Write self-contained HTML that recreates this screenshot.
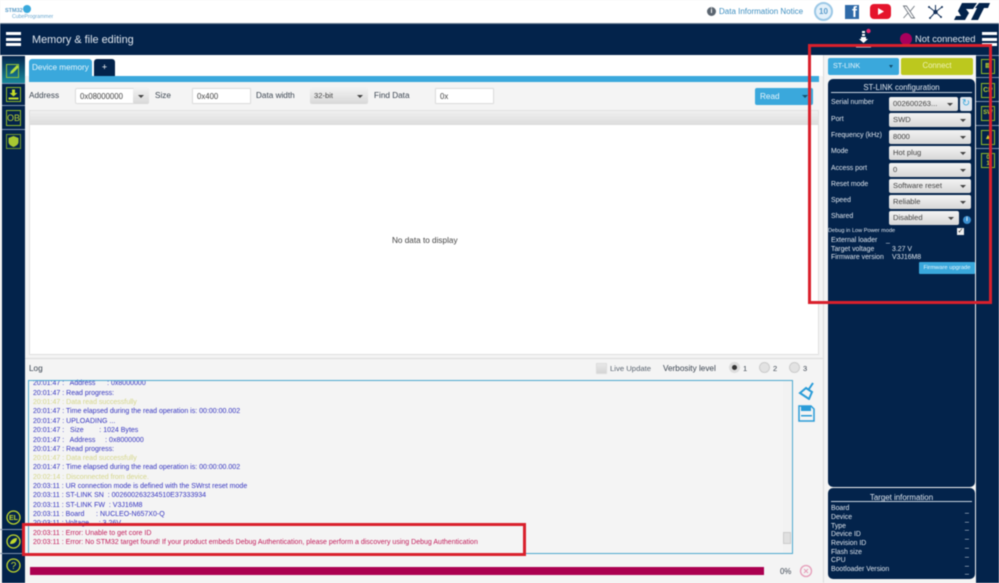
<!DOCTYPE html>
<html><head><meta charset="utf-8">
<style>
html,body{margin:0;padding:0;width:999px;height:583px;overflow:hidden;background:#f4f4f4;font-family:"Liberation Sans",sans-serif;}
#p{position:absolute;left:0;top:0;width:999px;height:583px;overflow:hidden;filter:blur(0.4px);}
.a{position:absolute;box-sizing:border-box;white-space:nowrap;}
.t{position:absolute;white-space:nowrap;font-size:8.2px;line-height:10px;color:#3a4450;margin-top:1px;}
.c{position:absolute;box-sizing:border-box;background:linear-gradient(#f2f2f2,#d8d8d8);border-radius:2px;font-size:7.6px;color:#444;padding-left:4px;white-space:nowrap;}
.c:after{content:"";position:absolute;right:5px;top:50%;margin-top:-1px;border-left:3px solid transparent;border-right:3px solid transparent;border-top:3px solid #444;}
.w{position:absolute;color:#dfe6ee;font-size:6.9px;line-height:9px;white-space:nowrap;margin-top:1px;}
.l{position:absolute;left:33px;font-size:7.03px;line-height:9px;white-space:nowrap;color:#3535c0;margin-top:1px;}
.y{color:#d5d68a}.r{color:#c21c5a}
.ic{position:absolute;box-sizing:border-box;border:1px solid #8fb82a;color:#b8d030;font-size:7px;text-align:center;font-weight:bold;}
.sep{position:absolute;height:1px;background:#7f93ad;}
</style></head><body><div id="p">

<!-- top bar -->
<div class="a" style="left:0;top:0;width:999px;height:24px;background:#fff;border-bottom:1px solid #6f8196;"></div>
<div class="a" style="left:5px;top:8px;font-size:5.5px;line-height:7px;font-weight:bold;color:#5a9cc8;">STM32</div>
<div class="a" style="left:23px;top:5px;width:8px;height:8px;border-radius:50%;background:#39a9dc;"></div>
<div class="a" style="left:12px;top:14px;font-size:5.2px;line-height:6px;color:#6ba8d0;">CubeProgrammer</div>
<div class="a" style="left:707px;top:7px;width:9px;height:9px;border-radius:50%;background:#5b6570;color:#fff;font-size:7px;line-height:9px;text-align:center;font-weight:bold;">i</div>
<div class="a" style="left:719px;top:7px;font-size:8px;line-height:10px;color:#3f8fc0;">Data Information Notice</div>
<div class="a" style="left:814px;top:2px;width:19px;height:19px;border-radius:50%;border:2px solid #9cc8e6;background:#e4f1fa;color:#5b9ccb;font-size:8px;line-height:15px;text-align:center;font-weight:bold;">10</div>
<div class="a" style="left:845px;top:5px;width:14px;height:14px;background:#2f6aa8;color:#fff;font-size:15px;line-height:16px;text-align:right;padding-right:2px;font-weight:bold;">f</div>
<svg class="a" style="left:870px;top:4px" width="21" height="16"><rect width="21" height="15" rx="4" fill="#e5142c"/><path d="M8 4l6 3.500-6 3.500z" fill="#fff"/></svg>
<svg class="a" style="left:902px;top:5px" width="14" height="14"><path d="M1.500 1h3l8 12h-3z" fill="none" stroke="#707780" stroke-width="0.900"/><path d="M12.500 1L8 6.500M6 8L1.500 13" stroke="#707780" stroke-width="0.900"/></svg>
<svg class="a" style="left:927px;top:4px" width="17" height="16"><path d="M8.500 8L2 3M8.500 8L15 3M8.500 8L3 14M8.500 8L14 13M8.500 8V1" stroke="#14315a" stroke-width="1"/><circle cx="8.500" cy="8" r="2.200" fill="#14315a"/><circle cx="2" cy="3" r="1" fill="#14315a"/><circle cx="15" cy="3" r="1" fill="#14315a"/><circle cx="3" cy="14" r="1" fill="#14315a"/><circle cx="14" cy="13" r="1" fill="#14315a"/></svg>
<svg class="a" style="left:953px;top:2px" width="37" height="19"><path d="M9 1H24L20 7H13L16 11 12 18H1L3 14H8L5 9z" fill="#03234b"/><path d="M26 1H37L35 6H31L25 18H18L24 6H22z" fill="#03234b"/></svg>

<!-- header -->
<div class="a" style="left:0;top:24px;width:999px;height:31px;background:#03234b;"></div>
<div class="a" style="left:6px;top:32px;width:15px;height:3px;background:#fff;"></div>
<div class="a" style="left:6px;top:38px;width:15px;height:3px;background:#fff;"></div>
<div class="a" style="left:6px;top:43px;width:15px;height:3px;background:#fff;"></div>
<div class="a" style="left:32px;top:33px;font-size:10.9px;line-height:14px;color:#dfe6ee;">Memory &amp; file editing</div>
<svg class="a" style="left:854px;top:27px" width="20" height="22"><path d="M8 4h3v2H8zM8 7h3v2H8zM7 10h5v2h2l-4.500 4L5 12h2z" fill="#fff"/><rect x="2" y="19" width="15" height="1.500" fill="#fff"/><circle cx="14.500" cy="4" r="2.200" fill="#e5286e"/></svg>
<div class="a" style="left:900px;top:33px;width:12px;height:12px;border-radius:50%;background:#a8005c;"></div>
<div class="a" style="left:915px;top:32px;font-size:9.4px;line-height:13px;color:#dfe6ee;">Not connected</div>
<div class="a" style="left:982px;top:32px;width:15px;height:3px;background:#fff;"></div>
<div class="a" style="left:982px;top:38px;width:15px;height:3px;background:#fff;"></div>
<div class="a" style="left:982px;top:43px;width:15px;height:3px;background:#fff;"></div>

<!-- left sidebar -->
<div class="a" style="left:2px;top:56px;width:23px;height:527px;background:#03234b;"></div>
<div class="a" style="left:2px;top:56px;width:23px;height:27px;background:linear-gradient(#03234b,#1a8a9c);"></div>
<svg class="a" style="left:6px;top:63px" width="15" height="16"><rect x="0.500" y="1.500" width="12" height="13" fill="none" stroke="#8fc23a"/><path d="M4 11l1-3 6-6 2 2-6 6z" fill="#b4dc3c"/></svg>
<div class="sep" style="left:2px;top:83px;width:23px"></div>
<svg class="a" style="left:6px;top:87px" width="15" height="15"><rect x="0.500" y="0.500" width="14" height="14" fill="none" stroke="#8fb82a"/><path d="M6 2.500h3V6h2.500L7.500 9.500 3.500 6H6zM2.500 10.500h10v2h-10z" fill="#c4dc28"/></svg>
<div class="sep" style="left:2px;top:105px;width:23px"></div>
<div class="ic" style="left:6px;top:110px;width:15px;height:16px;font-size:9px;line-height:14px;font-weight:normal;">OB</div>
<div class="sep" style="left:2px;top:129px;width:23px"></div>
<svg class="a" style="left:6px;top:134px" width="15" height="15"><rect x="0.500" y="0.500" width="14" height="14" fill="none" stroke="#6f9a2c"/><path d="M7.500 2l5 2v4c0 2.500-2.500 4-5 5-2.500-1-5-2.500-5-5V4z" fill="#a6c832"/></svg>
<svg class="a" style="left:6px;top:510px" width="15" height="15"><circle cx="7.500" cy="7.500" r="6.500" fill="none" stroke="#c0d82c" stroke-width="1.300"/><text x="7.500" y="10" font-size="7" font-weight="bold" text-anchor="middle" fill="#c0d82c" font-family="Liberation Sans">EL</text></svg>
<div class="sep" style="left:0;top:529px;width:25px"></div>
<svg class="a" style="left:6px;top:534px" width="15" height="15"><circle cx="7.500" cy="7.500" r="6.500" fill="none" stroke="#c0d82c" stroke-width="1.300"/><path d="M4 10c0-3 3-6 7-6 0 4-3 6-6 6z" fill="#c0d82c"/></svg>
<div class="sep" style="left:0;top:553px;width:25px"></div>
<svg class="a" style="left:6px;top:558px" width="15" height="15"><circle cx="7.500" cy="7.500" r="6.500" fill="none" stroke="#c0d82c" stroke-width="1.300"/><text x="7.500" y="11" font-size="10" text-anchor="middle" fill="#c0d82c" font-family="Liberation Sans">?</text></svg>

<!-- tabs -->
<div class="a" style="left:25px;top:55px;width:798px;height:21px;background:#fff;"></div>
<div class="a" style="left:29px;top:59px;width:63px;height:18px;background:#3aa8dc;border-radius:3px 3px 0 0;color:#e6f4fb;font-size:8.200px;line-height:17px;padding-left:3px;">Device memory</div>
<div class="a" style="left:94px;top:59px;width:21px;height:18px;background:#03234b;border-radius:3px 3px 0 0;color:#fff;font-size:9px;line-height:16px;text-align:center;">+</div>
<div class="a" style="left:29px;top:76px;width:790px;height:6px;background:#3aa8dc;"></div>

<!-- toolbar -->
<div class="t" style="left:29px;top:90px;">Address</div>
<div class="a" style="left:75px;top:88px;width:74px;height:16px;background:#fff;border:1px solid #ddd;border-radius:2px;font-size:7.800px;line-height:15px;padding-left:4px;color:#444;">0x08000000</div>
<div class="c" style="left:133px;top:88px;width:16px;height:16px;"></div>
<div class="t" style="left:155px;top:90px;">Size</div>
<div class="a" style="left:192px;top:88px;width:59px;height:16px;background:#fff;border:1px solid #ddd;font-size:7.800px;line-height:15px;padding-left:4px;color:#444;">0x400</div>
<div class="t" style="left:256px;top:90px;">Data width</div>
<div class="c" style="left:310px;top:88px;width:58px;height:16px;line-height:16px;">32-bit</div>
<div class="t" style="left:374px;top:90px;">Find Data</div>
<div class="a" style="left:435px;top:88px;width:59px;height:16px;background:#fff;border:1px solid #ddd;font-size:7.800px;line-height:15px;padding-left:4px;color:#444;">0x</div>
<div class="a" style="left:755px;top:88px;width:58px;height:17px;background:#3aa8dc;border-radius:2px;color:#e6f4fb;font-size:8.200px;line-height:17px;padding-left:5px;">Read</div>
<div class="a" style="left:802px;top:95px;border-left:3px solid transparent;border-right:3px solid transparent;border-top:3px solid #14506f;"></div>

<!-- table -->
<div class="a" style="left:29px;top:110px;width:790px;height:245px;background:#fff;border:1px solid #e0e0e0;"></div>
<div class="a" style="left:30px;top:111px;width:788px;height:14px;background:linear-gradient(#f0f0f0,#dcdcdc);"></div>
<div class="t" style="left:392px;top:235px;font-size:8.200px;color:#444;">No data to display</div>
<div class="a" style="left:25px;top:358px;width:798px;height:1px;background:#ddd;"></div>

<!-- log head -->
<div class="t" style="left:29px;top:363px;">Log</div>
<div class="a" style="left:596px;top:363px;width:11px;height:11px;background:linear-gradient(#e8e8e8,#d4d4d4);border:1px solid #ddd;"></div>
<div class="t" style="left:610px;top:363px;font-size:7.700px;color:#5a6470;">Live Update</div>
<div class="t" style="left:663px;top:363px;">Verbosity level</div>
<div class="a" style="left:729px;top:362px;width:11px;height:11px;border-radius:50%;background:#dcdcdc;"></div>
<div class="a" style="left:732px;top:365px;width:5px;height:5px;border-radius:50%;background:#333;"></div>
<div class="t" style="left:743px;top:363px;font-size:7.500px;">1</div>
<div class="a" style="left:759px;top:362px;width:11px;height:11px;border-radius:50%;background:#e2e2e2;border:1px solid #ccc;"></div>
<div class="t" style="left:773px;top:363px;font-size:7.500px;">2</div>
<div class="a" style="left:789px;top:362px;width:11px;height:11px;border-radius:50%;background:#e2e2e2;border:1px solid #ccc;"></div>
<div class="t" style="left:803px;top:363px;font-size:7.500px;">3</div>

<!-- log box -->
<div class="a" style="left:28px;top:380px;width:765px;height:174px;background:#f4f4f4;border:1px solid #4fa9cf;overflow:hidden;"></div>
<div class="a" style="left:783px;top:381px;width:9px;height:172px;background:#f2f2f2;"></div>
<div class="a" style="left:783px;top:532px;width:8px;height:12px;background:#e0e0e0;border:1px solid #ccc;"></div>
<div class="l" style="top:378px;">20:01:47 :&nbsp;&nbsp; Address&nbsp;&nbsp;&nbsp;&nbsp;&nbsp; : 0x8000000</div>
<div class="a" style="left:29px;top:380px;width:600px;height:1px;background:#4fa9cf;"></div>
<div class="l" style="top:388px;">20:01:47 : Read progress:</div>
<div class="l y" style="top:397px;">20:01:47 : Data read successfully</div>
<div class="l" style="top:406px;">20:01:47 : Time elapsed during the read operation is: 00:00:00.002</div>
<div class="l" style="top:416px;">20:01:47 : UPLOADING ...</div>
<div class="l" style="top:425px;">20:01:47 :&nbsp;&nbsp; Size&nbsp;&nbsp;&nbsp;&nbsp;&nbsp;&nbsp;&nbsp; : 1024 Bytes</div>
<div class="l" style="top:435px;">20:01:47 :&nbsp;&nbsp; Address&nbsp;&nbsp;&nbsp;&nbsp; : 0x8000000</div>
<div class="l" style="top:444px;">20:01:47 : Read progress:</div>
<div class="l y" style="top:453px;">20:01:47 : Data read successfully</div>
<div class="l" style="top:462px;">20:01:47 : Time elapsed during the read operation is: 00:00:00.002</div>
<div class="l y" style="top:472px;">20:02:14 : Disconnected from device.</div>
<div class="l" style="top:481px;">20:03:11 : UR connection mode is defined with the SWrst reset mode</div>
<div class="l" style="top:490px;">20:03:11 : ST-LINK SN&nbsp; : 002600263234510E37333934</div>
<div class="l" style="top:500px;">20:03:11 : ST-LINK FW&nbsp; : V3J16M8</div>
<div class="l" style="top:509px;">20:03:11 : Board&nbsp;&nbsp;&nbsp;&nbsp;&nbsp; : NUCLEO-N657X0-Q</div>
<div class="l" style="top:518px;">20:03:11 : Voltage&nbsp;&nbsp;&nbsp;&nbsp; : 3.26V</div>
<div class="l r" style="top:528px;">20:03:11 : Error: Unable to get core ID</div>
<div class="l r" style="top:537px;">20:03:11 : Error: No STM32 target found! If your product embeds Debug Authentication, please perform a discovery using Debug Authentication</div>

<!-- log tools -->
<svg class="a" style="left:798px;top:382px" width="18" height="18"><path d="M15 1l-4 6M8 6l6 4-3 7-9-6z" fill="none" stroke="#2a9cd8" stroke-width="2"/></svg>
<svg class="a" style="left:798px;top:405px" width="17" height="17"><path d="M1 1h12l3 3v12H1z" fill="none" stroke="#2a9cd8" stroke-width="1.500"/><rect x="3" y="1" width="10" height="5" fill="#2a9cd8"/><rect x="3" y="10" width="11" height="1.500" fill="#2a9cd8"/></svg>

<!-- progress -->
<div class="a" style="left:30px;top:567px;width:734px;height:8px;background:#ab0050;"></div>
<div class="t" style="left:780px;top:566px;font-size:7.800px;">0%</div>
<svg class="a" style="left:799px;top:564px" width="14" height="14"><circle cx="7" cy="7" r="5.500" fill="none" stroke="#e59cb8" stroke-width="1.300"/><path d="M5 5l4 4M9 5l-4 4" stroke="#e59cb8"/></svg>

<!-- right area -->
<div class="a" style="left:823px;top:55px;width:153px;height:528px;background:#f4f4f4;border-left:1px solid #ddd;"></div>
<div class="a" style="left:828px;top:58px;width:71px;height:17px;background:#3aa8dc;border-radius:2px;color:#e6f4fb;font-size:7.200px;line-height:16px;padding-left:5px;">ST-LINK</div>
<div class="a" style="left:889px;top:65px;border-left:2.500px solid transparent;border-right:2.500px solid transparent;border-top:3px solid #14506f;"></div>
<div class="a" style="left:901px;top:58px;width:72px;height:17px;background:#bcc81e;border-radius:2px;color:#eef2b4;font-size:7.800px;line-height:16px;text-align:center;">Connect</div>

<div class="a" style="left:828px;top:79px;width:147px;height:408px;background:#03234b;border-radius:5px;"></div>
<div class="a" style="left:831px;top:83px;width:141px;text-align:center;color:#dfe6ee;font-size:7.800px;line-height:10px;">ST-LINK configuration</div>
<div class="a" style="left:831px;top:92px;width:141px;height:1px;background:#c8d4e0;"></div>

<div class="w" style="left:831px;top:97px;">Serial number</div>
<div class="c" style="left:889px;top:97px;width:69px;height:14px;line-height:14px;">002600263...</div>
<div class="a" style="left:960px;top:97px;width:12px;height:14px;background:#dfe6ee;border-radius:2px;color:#3aa8dc;font-size:10px;line-height:13px;text-align:center;">&#8635;</div>
<div class="w" style="left:831px;top:114px;">Port</div>
<div class="c" style="left:889px;top:113px;width:82px;height:14px;line-height:14px;">SWD</div>
<div class="w" style="left:831px;top:130px;">Frequency (kHz)</div>
<div class="c" style="left:889px;top:130px;width:82px;height:14px;line-height:14px;">8000</div>
<div class="w" style="left:831px;top:146px;">Mode</div>
<div class="c" style="left:889px;top:146px;width:82px;height:14px;line-height:14px;">Hot plug</div>
<div class="w" style="left:831px;top:163px;">Access port</div>
<div class="c" style="left:889px;top:163px;width:82px;height:14px;line-height:14px;">0</div>
<div class="w" style="left:831px;top:179px;">Reset mode</div>
<div class="c" style="left:889px;top:179px;width:82px;height:14px;line-height:14px;">Software reset</div>
<div class="w" style="left:831px;top:195px;">Speed</div>
<div class="c" style="left:889px;top:195px;width:82px;height:14px;line-height:14px;">Reliable</div>
<div class="w" style="left:831px;top:211px;">Shared</div>
<div class="c" style="left:889px;top:211px;width:70px;height:14px;line-height:14px;">Disabled</div>
<div class="a" style="left:963px;top:216px;width:8px;height:8px;border-radius:50%;background:#3a8fd0;color:#fff;font-size:6px;line-height:8px;text-align:center;font-weight:bold;">i</div>
<div class="w" style="left:828px;top:227px;font-size:5.600px;line-height:7px;">Debug in Low Power mode</div>
<div class="a" style="left:957px;top:228px;width:7px;height:7px;background:#eee;color:#222;font-size:7px;line-height:7px;text-align:center;">&#10003;</div>
<div class="w" style="left:831px;top:235px;">External loader</div>
<div class="w" style="left:886px;top:235px;">_</div>
<div class="w" style="left:831px;top:244px;">Target voltage</div>
<div class="w" style="left:892px;top:244px;">3.27 V</div>
<div class="w" style="left:831px;top:252px;">Firmware version</div>
<div class="w" style="left:892px;top:252px;">V3J16M8</div>
<div class="a" style="left:919px;top:262px;width:56px;height:12px;background:#3aa8dc;border-radius:1px;color:#e6f4fb;font-size:5.800px;line-height:12px;text-align:center;">Firmware upgrade</div>

<div class="a" style="left:828px;top:488px;width:147px;height:91px;background:#03234b;border-radius:5px;"></div>
<div class="a" style="left:828px;top:493px;width:147px;text-align:center;color:#dfe6ee;font-size:7.900px;line-height:10px;">Target information</div>
<div class="a" style="left:831px;top:501px;width:141px;height:1px;background:#c8d4e0;"></div>
<div class="w" style="left:831px;top:503px;">Board</div><div class="w" style="left:965px;top:505px;">_</div>
<div class="w" style="left:831px;top:512px;">Device</div><div class="w" style="left:965px;top:514px;">_</div>
<div class="w" style="left:831px;top:521px;">Type</div><div class="w" style="left:965px;top:522px;">_</div>
<div class="w" style="left:831px;top:529px;">Device ID</div><div class="w" style="left:965px;top:531px;">_</div>
<div class="w" style="left:831px;top:538px;">Revision ID</div><div class="w" style="left:965px;top:540px;">_</div>
<div class="w" style="left:831px;top:547px;">Flash size</div><div class="w" style="left:965px;top:549px;">_</div>
<div class="w" style="left:831px;top:555px;">CPU</div><div class="w" style="left:965px;top:558px;">_</div>
<div class="w" style="left:831px;top:564px;">Bootloader Version</div><div class="w" style="left:965px;top:566px;">_</div>

<!-- right strip -->
<div class="a" style="left:976px;top:55px;width:23px;height:528px;background:#03234b;"></div>
<div class="sep" style="left:976px;top:55px;width:23px"></div>
<div class="ic" style="left:981px;top:59px;width:14px;height:15px;font-size:6px;line-height:13px;">&#9636;</div>
<div class="sep" style="left:976px;top:77px;width:23px"></div>
<div class="ic" style="left:981px;top:83px;width:14px;height:15px;line-height:13px;">CP</div>
<div class="sep" style="left:976px;top:101px;width:23px"></div>
<div class="ic" style="left:981px;top:106px;width:14px;height:15px;font-size:6px;line-height:13px;">SW</div>
<div class="sep" style="left:976px;top:125px;width:23px"></div>
<div class="ic" style="left:981px;top:130px;width:14px;height:15px;line-height:13px;color:#d8d028;">&#9650;</div>
<div class="sep" style="left:976px;top:148px;width:23px"></div>
<div class="ic" style="left:981px;top:153px;width:14px;height:15px;font-size:6px;line-height:6px;padding-top:1px;">0<br>1</div>

<!-- red annotations -->
<div class="a" style="left:808px;top:44px;width:184px;height:260px;border:3px solid #d9202c;"></div>
<div class="a" style="left:22px;top:523px;width:504px;height:33px;border:3px solid #d9202c;"></div>
</div></body></html>
